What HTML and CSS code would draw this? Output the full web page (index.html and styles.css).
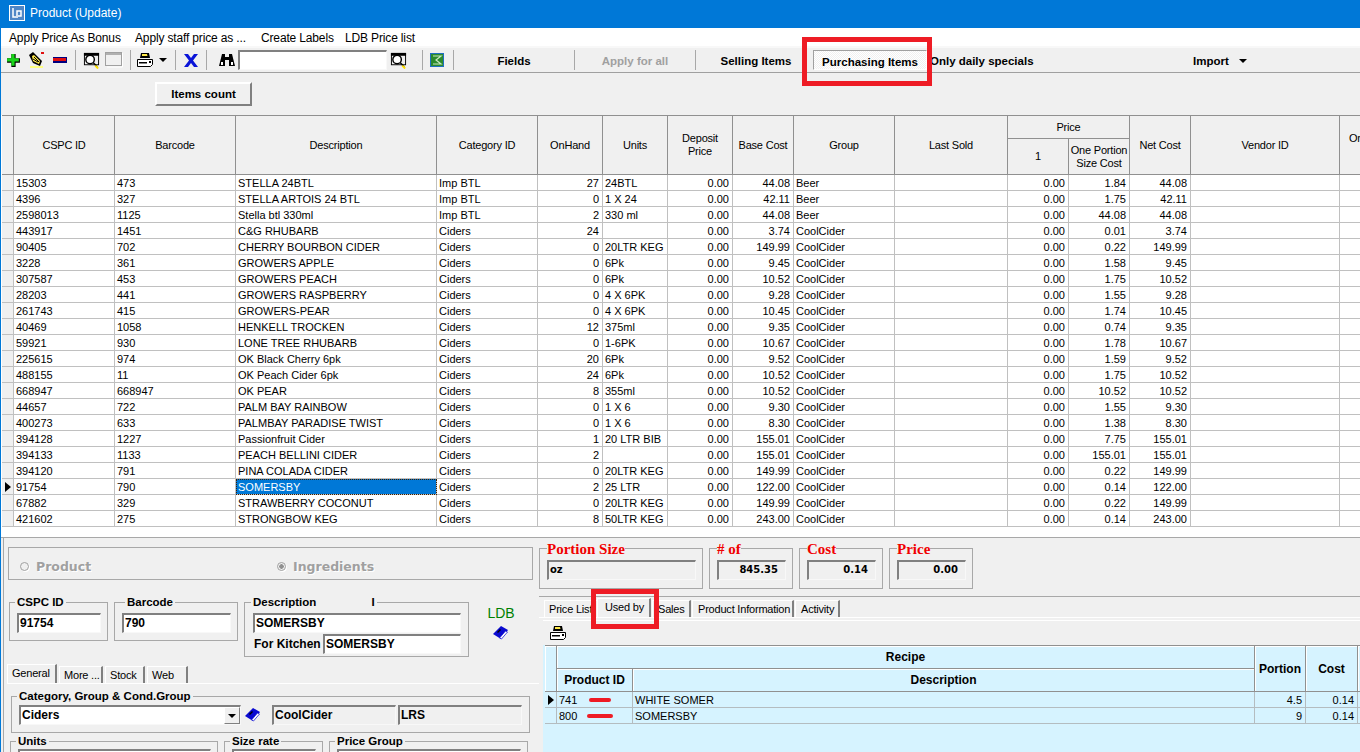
FILE: index.html
```html
<!DOCTYPE html>
<html lang="en">
<head>
<meta charset="utf-8">
<title>Product (Update)</title>
<link rel="stylesheet" href="styles.css">
</head>
<body>
<svg class="defs" width="0" height="0" aria-hidden="true">
  <symbol id="i-mag" viewBox="0 0 18 18">
    <rect x="1.500" y="1.500" width="15" height="12" fill="#f0f0f0" stroke="#000"/>
    <rect x="1" y="1" width="16" height="3" fill="#000"/>
    <circle cx="7.500" cy="8" r="4.500" fill="#fff" stroke="#000" stroke-width="1.500"/>
    <path d="M11 11.500l4 4" stroke="#000" stroke-width="1.500"/>
    <path d="M13 14.500l3 3" stroke="#ffe000" stroke-width="2"/>
  </symbol>
  <symbol id="i-printer" viewBox="0 0 18 16">
    <path d="M5 1h8l1 5H4z" fill="#000"/>
    <path d="M6 2h5l.5 2H6z" fill="#ffe94a"/>
    <path d="M1.500 7.500h15v5l-2 2h-13z" fill="#fff" stroke="#000"/>
    <path d="M3 10h8v1.500H3z" fill="#000"/>
    <path d="M13 9h2v2h-2z" fill="#000"/>
  </symbol>
  <symbol id="i-book" viewBox="0 0 16 14">
    <path d="M8 0l7 4-7 9-8-5z" fill="#0a0ad0"/>
    <path d="M12.500 5l2 1-6 7-2-1z" fill="#fff" stroke="#0a0ad0" stroke-width=".7"/>
    <path d="M4 6l3-3 1 1-3 3z" fill="#000"/>
  </symbol>
</svg>
<div class="window">
  <header class="titlebar">
    <svg class="applogo" width="16" height="16" viewBox="0 0 16 16"><rect width="16" height="16" fill="#fff"/><rect x="1" y="1" width="14" height="14" fill="#4f86c6"/><path d="M4 3v9h3M8 13V6h4v5H9" fill="none" stroke="#fff" stroke-width="1.500"/></svg>
    <span>Product (Update)</span>
  </header>
  <nav class="menubar">
    <span class="m1">Apply Price As Bonus</span>
    <span class="m2">Apply staff price as ...</span>
    <span class="m3">Create Labels</span>
    <span>LDB Price list</span>
  </nav>
  <div class="toolbar">
    <div class="tool"><svg width="15" height="15" viewBox="0 0 14 14"><path d="M5 1h4v4h4v4H9v4H5V9H1V5h4z" fill="#000"/><path d="M5 1h3v4h4v3H8v4H5V8H1V5h4z" fill="#19d419"/></svg></div>
    <div class="tool"><svg width="16" height="17" viewBox="0 0 16 17"><path d="M0 3l4-3 9 9-2 5-7-3z" fill="#000"/><path d="M3 4l2-1 6 6-1 3-6-3z" fill="#ffe94a"/><path d="M5 5l5 5M4 7l5 3" stroke="#000"/><rect x="12" y="0" width="3" height="2" fill="#e01010"/><rect x="1" y="14" width="13" height="2" fill="#ffff80"/></svg></div>
    <div class="tool"><svg width="14" height="6" viewBox="0 0 14 6"><rect width="14" height="6" fill="#000080"/><rect width="13" height="3" y="1" fill="#e01010"/></svg></div>
    <div class="sep"></div>
    <div class="tool"><svg width="17" height="17"><use href="#i-mag"/></svg></div>
    <div class="tool"><svg width="18" height="16" viewBox="0 0 18 16"><rect x=".5" y=".5" width="16" height="13" fill="#f0f0f0" stroke="#a0a0a0"/><rect x="1" y="1" width="15" height="2" fill="#b0b0b0"/><path d="M17.500 1v14H2" stroke="#fff" fill="none"/></svg></div>
    <div class="sep"></div>
    <div class="tool"><svg width="18" height="16"><use href="#i-printer"/></svg></div>
    <div class="tool"><i class="caret"></i></div>
    <div class="sep"></div>
    <div class="tool"><svg width="14" height="13" viewBox="0 0 14 13"><path d="M0 0h4l3 4 3-4h4L9 6.500 14 13h-4L7 9l-3 4H0l5-6.500z" fill="#0a14d8"/></svg></div>
    <div class="sep"></div>
    <div class="tool tool-end"><svg width="16" height="14" viewBox="0 0 16 14"><path d="M3 1h3v3h4V1h3l3 12h-6V7H6v6H0z" fill="#000"/><path d="M2 9h2v3H2zM12 9h2v3h-2z" fill="#fff"/></svg></div>
    <div class="search"></div>
    <div class="tool tool-start"><svg width="17" height="17"><use href="#i-mag"/></svg></div>
    <div class="sep"></div>
    <div class="tool"><svg width="14" height="14" viewBox="0 0 14 14"><rect width="14" height="14" fill="#1f6fc0"/><rect x="1" y="1" width="12" height="12" fill="#2c8a2c"/><path d="M3 3h8L6 7l5 4H3" fill="none" stroke="#c8e8c0" stroke-width="1.200"/></svg></div>
    <div class="sep"></div>
    <div class="tbtext">Fields</div>
    <div class="sep"></div>
    <div class="tbtext disabled">Apply for all</div>
    <div class="sep"></div>
    <div class="tbtext">Selling Items</div>
    <div class="tbtext pressed">Purchasing Items</div>
    <div class="tbtext left">Only daily specials</div>
    <div class="tbtext import">Import <i class="caret caret-gap"></i></div>
  </div>
  <div class="band"><button class="countbtn" type="button">Items count</button></div>

  <div class="gridwrap">
    <table class="grid main">
      <colgroup><col class="c12"><col class="c101"><col class="c121"><col class="c201"><col class="c101"><col class="c65"><col class="c65"><col class="c65"><col class="c61"><col class="c101"><col class="c113"><col class="c61"><col class="c61"><col class="c61"><col class="c149"><col class="c60"></colgroup>
      <thead>
        <tr class="h1"><th rowspan="2"></th><th rowspan="2">CSPC ID</th><th rowspan="2">Barcode</th><th rowspan="2">Description</th><th rowspan="2">Category ID</th><th rowspan="2">OnHand</th><th rowspan="2">Units</th><th rowspan="2">Deposit<br>Price</th><th rowspan="2">Base Cost</th><th rowspan="2">Group</th><th rowspan="2">Last Sold</th><th colspan="2">Price</th><th rowspan="2">Net Cost</th><th rowspan="2">Vendor ID</th><th rowspan="2" class="clip">Or</th></tr>
        <tr class="h2"><th>1</th><th>One Portion<br>Size Cost</th></tr>
      </thead>
      <tbody>
        <tr><td></td><td>15303</td><td>473</td><td>STELLA 24BTL</td><td>Imp BTL</td><td>27</td><td>24BTL</td><td>0.00</td><td>44.08</td><td>Beer</td><td></td><td>0.00</td><td>1.84</td><td>44.08</td><td></td><td></td></tr>
        <tr><td></td><td>4396</td><td>327</td><td>STELLA ARTOIS 24 BTL</td><td>Imp BTL</td><td>0</td><td>1 X 24</td><td>0.00</td><td>42.11</td><td>Beer</td><td></td><td>0.00</td><td>1.75</td><td>42.11</td><td></td><td></td></tr>
        <tr><td></td><td>2598013</td><td>1125</td><td>Stella btl 330ml</td><td>Imp BTL</td><td>2</td><td>330 ml</td><td>0.00</td><td>44.08</td><td>Beer</td><td></td><td>0.00</td><td>44.08</td><td>44.08</td><td></td><td></td></tr>
        <tr><td></td><td>443917</td><td>1451</td><td>C&amp;G RHUBARB</td><td>Ciders</td><td>24</td><td></td><td>0.00</td><td>3.74</td><td>CoolCider</td><td></td><td>0.00</td><td>0.01</td><td>3.74</td><td></td><td></td></tr>
        <tr><td></td><td>90405</td><td>702</td><td>CHERRY BOURBON CIDER</td><td>Ciders</td><td>0</td><td>20LTR KEG</td><td>0.00</td><td>149.99</td><td>CoolCider</td><td></td><td>0.00</td><td>0.22</td><td>149.99</td><td></td><td></td></tr>
        <tr><td></td><td>3228</td><td>361</td><td>GROWERS APPLE</td><td>Ciders</td><td>0</td><td>6Pk</td><td>0.00</td><td>9.45</td><td>CoolCider</td><td></td><td>0.00</td><td>1.58</td><td>9.45</td><td></td><td></td></tr>
        <tr><td></td><td>307587</td><td>453</td><td>GROWERS PEACH</td><td>Ciders</td><td>0</td><td>6Pk</td><td>0.00</td><td>10.52</td><td>CoolCider</td><td></td><td>0.00</td><td>1.75</td><td>10.52</td><td></td><td></td></tr>
        <tr><td></td><td>28203</td><td>441</td><td>GROWERS RASPBERRY</td><td>Ciders</td><td>0</td><td>4 X 6PK</td><td>0.00</td><td>9.28</td><td>CoolCider</td><td></td><td>0.00</td><td>1.55</td><td>9.28</td><td></td><td></td></tr>
        <tr><td></td><td>261743</td><td>415</td><td>GROWERS-PEAR</td><td>Ciders</td><td>0</td><td>4 X 6PK</td><td>0.00</td><td>10.45</td><td>CoolCider</td><td></td><td>0.00</td><td>1.74</td><td>10.45</td><td></td><td></td></tr>
        <tr><td></td><td>40469</td><td>1058</td><td>HENKELL TROCKEN</td><td>Ciders</td><td>12</td><td>375ml</td><td>0.00</td><td>9.35</td><td>CoolCider</td><td></td><td>0.00</td><td>0.74</td><td>9.35</td><td></td><td></td></tr>
        <tr><td></td><td>59921</td><td>930</td><td>LONE TREE RHUBARB</td><td>Ciders</td><td>0</td><td>1-6PK</td><td>0.00</td><td>10.67</td><td>CoolCider</td><td></td><td>0.00</td><td>1.78</td><td>10.67</td><td></td><td></td></tr>
        <tr><td></td><td>225615</td><td>974</td><td>OK Black Cherry 6pk</td><td>Ciders</td><td>20</td><td>6Pk</td><td>0.00</td><td>9.52</td><td>CoolCider</td><td></td><td>0.00</td><td>1.59</td><td>9.52</td><td></td><td></td></tr>
        <tr><td></td><td>488155</td><td>11</td><td>OK Peach Cider 6pk</td><td>Ciders</td><td>24</td><td>6Pk</td><td>0.00</td><td>10.52</td><td>CoolCider</td><td></td><td>0.00</td><td>1.75</td><td>10.52</td><td></td><td></td></tr>
        <tr><td></td><td>668947</td><td>668947</td><td>OK PEAR</td><td>Ciders</td><td>8</td><td>355ml</td><td>0.00</td><td>10.52</td><td>CoolCider</td><td></td><td>0.00</td><td>10.52</td><td>10.52</td><td></td><td></td></tr>
        <tr><td></td><td>44657</td><td>722</td><td>PALM BAY RAINBOW</td><td>Ciders</td><td>0</td><td>1 X 6</td><td>0.00</td><td>9.30</td><td>CoolCider</td><td></td><td>0.00</td><td>1.55</td><td>9.30</td><td></td><td></td></tr>
        <tr><td></td><td>400273</td><td>633</td><td>PALMBAY PARADISE TWIST</td><td>Ciders</td><td>0</td><td>1 X 6</td><td>0.00</td><td>8.30</td><td>CoolCider</td><td></td><td>0.00</td><td>1.38</td><td>8.30</td><td></td><td></td></tr>
        <tr><td></td><td>394128</td><td>1227</td><td>Passionfruit Cider</td><td>Ciders</td><td>1</td><td>20 LTR BIB</td><td>0.00</td><td>155.01</td><td>CoolCider</td><td></td><td>0.00</td><td>7.75</td><td>155.01</td><td></td><td></td></tr>
        <tr><td></td><td>394133</td><td>1133</td><td>PEACH BELLINI CIDER</td><td>Ciders</td><td>2</td><td></td><td>0.00</td><td>155.01</td><td>CoolCider</td><td></td><td>0.00</td><td>155.01</td><td>155.01</td><td></td><td></td></tr>
        <tr><td></td><td>394120</td><td>791</td><td>PINA COLADA CIDER</td><td>Ciders</td><td>0</td><td>20LTR KEG</td><td>0.00</td><td>149.99</td><td>CoolCider</td><td></td><td>0.00</td><td>0.22</td><td>149.99</td><td></td><td></td></tr>
        <tr><td class="marker"><i class="arrow"></i></td><td>91754</td><td>790</td><td class="selected">SOMERSBY</td><td>Ciders</td><td>2</td><td>25 LTR</td><td>0.00</td><td>122.00</td><td>CoolCider</td><td></td><td>0.00</td><td>0.14</td><td>122.00</td><td></td><td></td></tr>
        <tr><td></td><td>67882</td><td>329</td><td>STRAWBERRY COCONUT</td><td>Ciders</td><td>0</td><td>20LTR KEG</td><td>0.00</td><td>149.99</td><td>CoolCider</td><td></td><td>0.00</td><td>0.22</td><td>149.99</td><td></td><td></td></tr>
        <tr><td></td><td>421602</td><td>275</td><td>STRONGBOW KEG</td><td>Ciders</td><td>8</td><td>50LTR KEG</td><td>0.00</td><td>243.00</td><td>CoolCider</td><td></td><td>0.00</td><td>0.14</td><td>243.00</td><td></td><td></td></tr>
      </tbody>
    </table>
  </div>

  <div class="bottom">
    <section class="leftpanel">
      <div class="radiobox">
        <label class="radio r-product"><i class="dot"></i>Product</label>
        <label class="radio"><i class="dot on"></i>Ingredients</label>
      </div>
      <div class="idrow">
        <fieldset class="fs fs-cspc"><legend>CSPC ID</legend><div class="inp">91754</div></fieldset>
        <fieldset class="fs fs-barcode"><legend>Barcode</legend><div class="inp">790</div></fieldset>
        <fieldset class="fs fs-desc"><legend>Description <b class="ibar">I</b></legend>
          <div class="inp">SOMERSBY</div>
          <div class="kitchen"><span>For Kitchen</span><div class="inp grow">SOMERSBY</div></div>
        </fieldset>
        <div class="ldb"><span>LDB</span><svg width="16" height="14"><use href="#i-book"/></svg></div>
      </div>
      <div class="tabs ltabs">
        <span class="tab active">General</span><span class="tab">More ...</span><span class="tab">Stock</span><span class="tab">Web</span>
      </div>
      <fieldset class="fs fs-cat"><legend>Category, Group &amp; Cond.Group</legend>
        <div class="catrow">
          <div class="inp combo">Ciders<i class="dropbtn"><i class="caret"></i></i></div>
          <svg class="catbook" width="16" height="14"><use href="#i-book"/></svg>
          <div class="inp ro w124">CoolCider</div>
          <div class="inp ro w124">LRS</div>
        </div>
      </fieldset>
      <div class="lastrow">
        <fieldset class="fs fs-units"><legend>Units</legend><div class="inp"></div></fieldset>
        <fieldset class="fs fs-size"><legend>Size rate</legend><div class="inp"></div></fieldset>
        <fieldset class="fs fs-pg"><legend>Price Group</legend><div class="inp"></div></fieldset>
      </div>
    </section>

    <section class="rightpanel">
      <div class="costrow">
        <fieldset class="fs red w164"><legend>Portion Size</legend><div class="inp ro small">oz</div></fieldset>
        <fieldset class="fs red w84"><legend># of</legend><div class="inp ro small num">845.35</div></fieldset>
        <fieldset class="fs red w84"><legend>Cost</legend><div class="inp ro small num">0.14</div></fieldset>
        <fieldset class="fs red w84"><legend>Price</legend><div class="inp ro small num">0.00</div></fieldset>
      </div>
      <div class="tabs rtabs">
        <span class="tab t-price">Price List</span><span class="tab active t-used">Used by</span><span class="tab t-sales">Sales</span><span class="tab t-info">Product Information</span><span class="tab t-act">Activity</span>
      </div>
      <div class="pane">
        <div class="panebar"><svg width="18" height="16"><use href="#i-printer"/></svg></div>
        <div class="bluewrap">
          <table class="grid sub">
            <colgroup><col class="c12"><col class="c76"><col class="c622"><col class="c51"><col class="c52"><col class="c60"></colgroup>
            <thead>
              <tr class="sh1"><th rowspan="2"></th><th colspan="2">Recipe</th><th rowspan="2">Portion</th><th rowspan="2">Cost</th><th rowspan="2"></th></tr>
              <tr class="sh2"><th>Product ID</th><th>Description</th></tr>
            </thead>
            <tbody>
              <tr><td class="marker"><i class="arrow"></i></td><td>741<i class="dash d1"></i></td><td>WHITE SOMER</td><td>4.5</td><td>0.14</td><td></td></tr>
              <tr><td></td><td>800<i class="dash d2"></i></td><td>SOMERSBY</td><td>9</td><td>0.14</td><td></td></tr>
            </tbody>
          </table>
        </div>
      </div>
    </section>
  </div>
  <div class="redbox rb-purchasing"></div>
  <div class="redbox rb-used"></div>
</div>
</body>
</html>
```

FILE: styles.css
```css
* { box-sizing: border-box; }
html, body { margin: 0; padding: 0; background: #f0f0f0; }
body { font-family: "Liberation Sans", Arial, sans-serif; font-size: 11px; color: #000; }
.defs { position: absolute; }
.window { position: relative; width: 1360px; height: 752px; overflow: hidden; background: #f0f0f0; border-left: 1px solid #0078d7; }

.titlebar { height: 28px; margin-left: -1px; padding: 0 0 2px 9px; background: #0078d7; color: #fff; font-size: 12px; display: flex; align-items: center; gap: 5px; }
.applogo { flex: none; }

.menubar { height: 18px; padding: 1px 0 0 8px; background: #fff; display: flex; align-items: center; font-size: 12px; letter-spacing: -.15px; white-space: nowrap; }
.menubar .m1 { width: 126px; }
.menubar .m2 { width: 126px; }
.menubar .m3 { width: 84px; }

.toolbar { height: 27px; display: grid; align-items: center; border-top: 2px solid #f8f8f8; border-bottom: 1px solid #a0a0a0;
  grid-template-columns: 25px 22px 24px 6px 26px 20px 12px 18px 18px 6px 26px 4px 30px 149px 30px 10px 20px 12px 110px 10px 112px 8px 114px 117px 210px 160px;
}
.tool { display: flex; align-items: center; justify-content: center; }
.tool-end { justify-content: flex-end; padding-right: 3px; }
.tool-start { justify-content: flex-start; padding-left: 3px; }
.sep { width: 1px; height: 20px; justify-self: center; background: #a8a8a8; }
.caret { display: inline-block; width: 0; height: 0; border-left: 4px solid transparent; border-right: 4px solid transparent; border-top: 4px solid #000; }
.caret-gap { margin-left: 7px; vertical-align: 2px; }
.search { height: 20px; background: #fff; border: 1px solid; border-color: #808080 #f8f8f8 #f8f8f8 #808080; border-width: 2px 1px 1px 2px; }
.tbtext { font-weight: 700; font-size: 11.5px; padding-top: 1px; text-align: center; white-space: nowrap; }
.tbtext.disabled { color: #a0a0a0; }
.tbtext.left { text-align: left; }
.tbtext.pressed { width: 114px; height: 20px; padding-top: 0; line-height: 23px; border: 1px solid; border-color: #a0a0a0 #fff #fff #a0a0a0; background: repeating-conic-gradient(#f0f0f0 0 25%, #fff 0 50%) 0 0 / 2px 2px; }

.band { height: 42px; padding: 9px 0 0 154px; }
.countbtn { display: block; width: 97px; height: 24px; padding: 0; font: 700 11.5px "Liberation Sans", Arial, sans-serif; background: #f0f0f0; border: 2px solid; border-color: #fff #808080 #808080 #fff; color: #000; }

.gridwrap { height: 423px; background: #fff; overflow: hidden; padding-left: 1px; border-bottom: 1px solid #a8a8a8; }
.grid { border-collapse: separate; border-spacing: 0; table-layout: fixed; }
.main { width: 1398px; }
.c12 { width: 12px; } .c51 { width: 51px; } .c52 { width: 52px; } .c60 { width: 60px; } .c61 { width: 61px; } .c65 { width: 65px; }
.c76 { width: 76px; } .c101 { width: 101px; } .c113 { width: 113px; } .c121 { width: 121px; } .c149 { width: 149px; } .c201 { width: 201px; } .c622 { width: 622px; }

.grid th { font-weight: 400; letter-spacing: -.2px; background: #f0f0f0; border-right: 1px solid #909090; border-bottom: 1px solid #909090; padding: 0; text-align: center; line-height: 13px; overflow: hidden; }
.main thead tr:first-child th { border-top: 1px solid #909090; }
.main .h1 { height: 24px; }
.main .h2 { height: 36px; }
.main .clip { text-align: left; padding: 0 0 13px 9px; }
.grid td { height: 16px; padding: 1px 3px 0 2px; line-height: 14px; white-space: nowrap; overflow: hidden; border-right: 1px solid #c0c0c0; border-bottom: 1px solid #c0c0c0; }
.main td:nth-child(1), .sub td:nth-child(1) { background: #f0f0f0; padding: 0; }
.main td:nth-child(6), .main td:nth-child(8), .main td:nth-child(9), .main td:nth-child(12), .main td:nth-child(13), .main td:nth-child(14) { text-align: right; }
.grid td.selected { background: #0078d7; color: #fff; outline: 1px dotted #402000; outline-offset: -1px; }
.marker { vertical-align: middle; }
.arrow { display: block; width: 0; height: 0; margin-left: 3px; border-top: 5px solid transparent; border-bottom: 5px solid transparent; border-left: 6px solid #000; }

.bottom { display: flex; height: 214px; }
.leftpanel { width: 536px; margin-left: 2px; flex: none; border-left: 1px solid #a8a8a8; overflow: hidden; }
.radiobox { margin: 9px 6px 0 4px; height: 33px; border: 1px solid #a8a8a8; display: flex; align-items: center; padding: 6px 0 0 11px; }
.radio { display: flex; align-items: center; font: 700 12.5px "DejaVu Sans", sans-serif; color: #a0a0a0; text-shadow: 1px 1px 0 #fff; }
.r-product { width: 257px; }
.dot { width: 9px; height: 9px; border-radius: 50%; border: 1px solid #a0a0a0; box-shadow: 1px 1px 0 #fff; margin-right: 7px; background: #f0f0f0; }
.dot.on { background: radial-gradient(circle, #909090 0 2px, #f0f0f0 2.500px); }

.fs { margin: 0; padding: 4px 6px 0 7px; border: 1px solid #a8a8a8; min-width: 0; }
.fs legend { padding: 0 2px; margin-left: -2px; height: 14px; line-height: 14px; font-weight: 700; font-size: 11.5px; white-space: nowrap; }
.inp { height: 20px; background: #fff; border: 1px solid; border-color: #808080 #f8f8f8 #f8f8f8 #808080; border-width: 2px 1px 1px 2px; font-weight: 700; font-size: 12px; line-height: 16px; padding-left: 1px; white-space: nowrap; overflow: hidden; }
.inp.ro { background: #f0f0f0; }
.idrow { display: flex; align-items: flex-start; gap: 6px; margin: 15px 0 0 5px; }
.fs-cspc { width: 99px; height: 46px; }
.fs-barcode { width: 124px; height: 46px; }
.fs-barcode legend { margin-left: 3px; }
.fs-desc { width: 225px; height: 62px; padding: 4px 7px 0 8px; }
.fs-desc .ibar { margin-left: 52px; }
.kitchen { display: flex; align-items: center; margin-top: 1px; font-weight: 700; font-size: 12px; white-space: nowrap; }
.kitchen span { width: 70px; padding-left: 1px; }
.grow { flex: 1; }
.ldb { width: 46px; margin: 11px 0 0 3px; display: flex; flex-direction: column; align-items: center; gap: 5px; color: #008000; font-size: 14px; line-height: 15px; }

.tabs { display: flex; align-items: flex-end; white-space: nowrap; }
.tab { height: 17px; line-height: 15px; letter-spacing: -.2px; padding: 1px 0 0 4px; background: #f0f0f0; border-top: 1px solid #fff; border-left: 1px solid #fff; border-right: 2px solid #808080; margin-right: 2px; }
.tab.active { height: 19px; line-height: 14px; }
.ltabs { margin: 7px 0 0 3px; height: 20px; border-bottom: 1px solid #fff; }
.ltabs .tab:nth-child(1) { width: 50px; }
.ltabs .tab:nth-child(2) { width: 44px; }
.ltabs .tab:nth-child(3) { width: 40px; }
.ltabs .tab:nth-child(4) { width: 41px; }
.fs-cat { margin: 5px 0 0 7px; width: 519px; height: 44px; padding: 2px 7px 0; }
.catrow { display: flex; align-items: center; }
.combo { width: 222px; position: relative; flex: none; }
.dropbtn { position: absolute; right: 0; top: 0; bottom: 0; width: 16px; background: #f0f0f0; border: 1px solid; border-color: #fff #808080 #808080 #fff; display: flex; align-items: center; justify-content: center; }
.catbook { margin: 0 11px 0 4px; flex: none; }
.w124 { width: 124px; margin-right: 2px; flex: none; }
.lastrow { display: flex; gap: 6px; margin: 1px 0 0 6px; }
.fs-units { width: 208px; height: 40px; padding-top: 1px; }
.fs-size { width: 99px; height: 40px; padding-top: 1px; }
.fs-pg { width: 199px; height: 40px; padding-top: 1px; }

.rightpanel { flex: 1; min-width: 0; overflow: hidden; }
.costrow { display: flex; gap: 6px; margin-top: 1px; height: 58px; border-bottom: 1px solid #a8a8a8; }
.fs.red { height: 50px; padding: 3px 6px 0 7px; }
.fs.red legend { color: #f00000; font: 700 15px/20px "Liberation Serif", serif; height: 18px; padding: 0; margin-left: 0; }
.w164 { width: 164px; flex: none; } .w84 { width: 84px; flex: none; }
.inp.small { height: 20px; font: 700 10px/16px "DejaVu Sans", sans-serif; }
.inp.num { text-align: right; padding-right: 7px; }

.rtabs { margin: 1px 0 0 5px; height: 19px; }
.rtabs .tab { margin-right: 1px; }
.rtabs .t-price { width: 53px; margin-right: 0; border-right: 0; }
.rtabs .t-used { width: 54px; padding-left: 7px; }
.rtabs .t-sales { width: 39px; padding-left: 5px; }
.rtabs .t-info { width: 102px; padding-left: 5px; }
.rtabs .t-act { width: 45px; padding-left: 5px; }
.pane { height: 135px; border-top: 1px solid #fff; padding: 2px 0 0 4px; }
.panebar { height: 25px; padding: 4px 0 0 6px; border-top: 1px solid #fff; }
.bluewrap { height: 107px; background: #d6f3ff; padding-left: 2px; overflow: hidden; }
.sub { width: 873px; }
.sub th { background: #d6f3ff; font-weight: 700; font-size: 12px; letter-spacing: 0; padding-top: 1px; box-shadow: inset 1px 1px 0 #fff; }
.sub thead tr:first-child th { border-top: 1px solid #909090; }
.sh1 { height: 24px; } .sh2 { height: 23px; }
.sub td { border-color: #b4bcc0; }
.sub td:nth-child(1) { background: #d6f3ff; }
.sub td:nth-child(4), .sub td:nth-child(5) { text-align: right; }
.dash { display: inline-block; height: 4px; background: #ee1c25; border-radius: 2px; vertical-align: 2px; }
.d1 { width: 22px; margin-left: 12px; }
.d2 { width: 26px; margin-left: 10px; }

.redbox { position: absolute; border: 5px solid #ee1c25; }
.rb-purchasing { left: 801px; top: 37px; width: 130px; height: 49px; }
.rb-used { left: 590px; top: 589px; width: 68px; height: 40px; }
```
